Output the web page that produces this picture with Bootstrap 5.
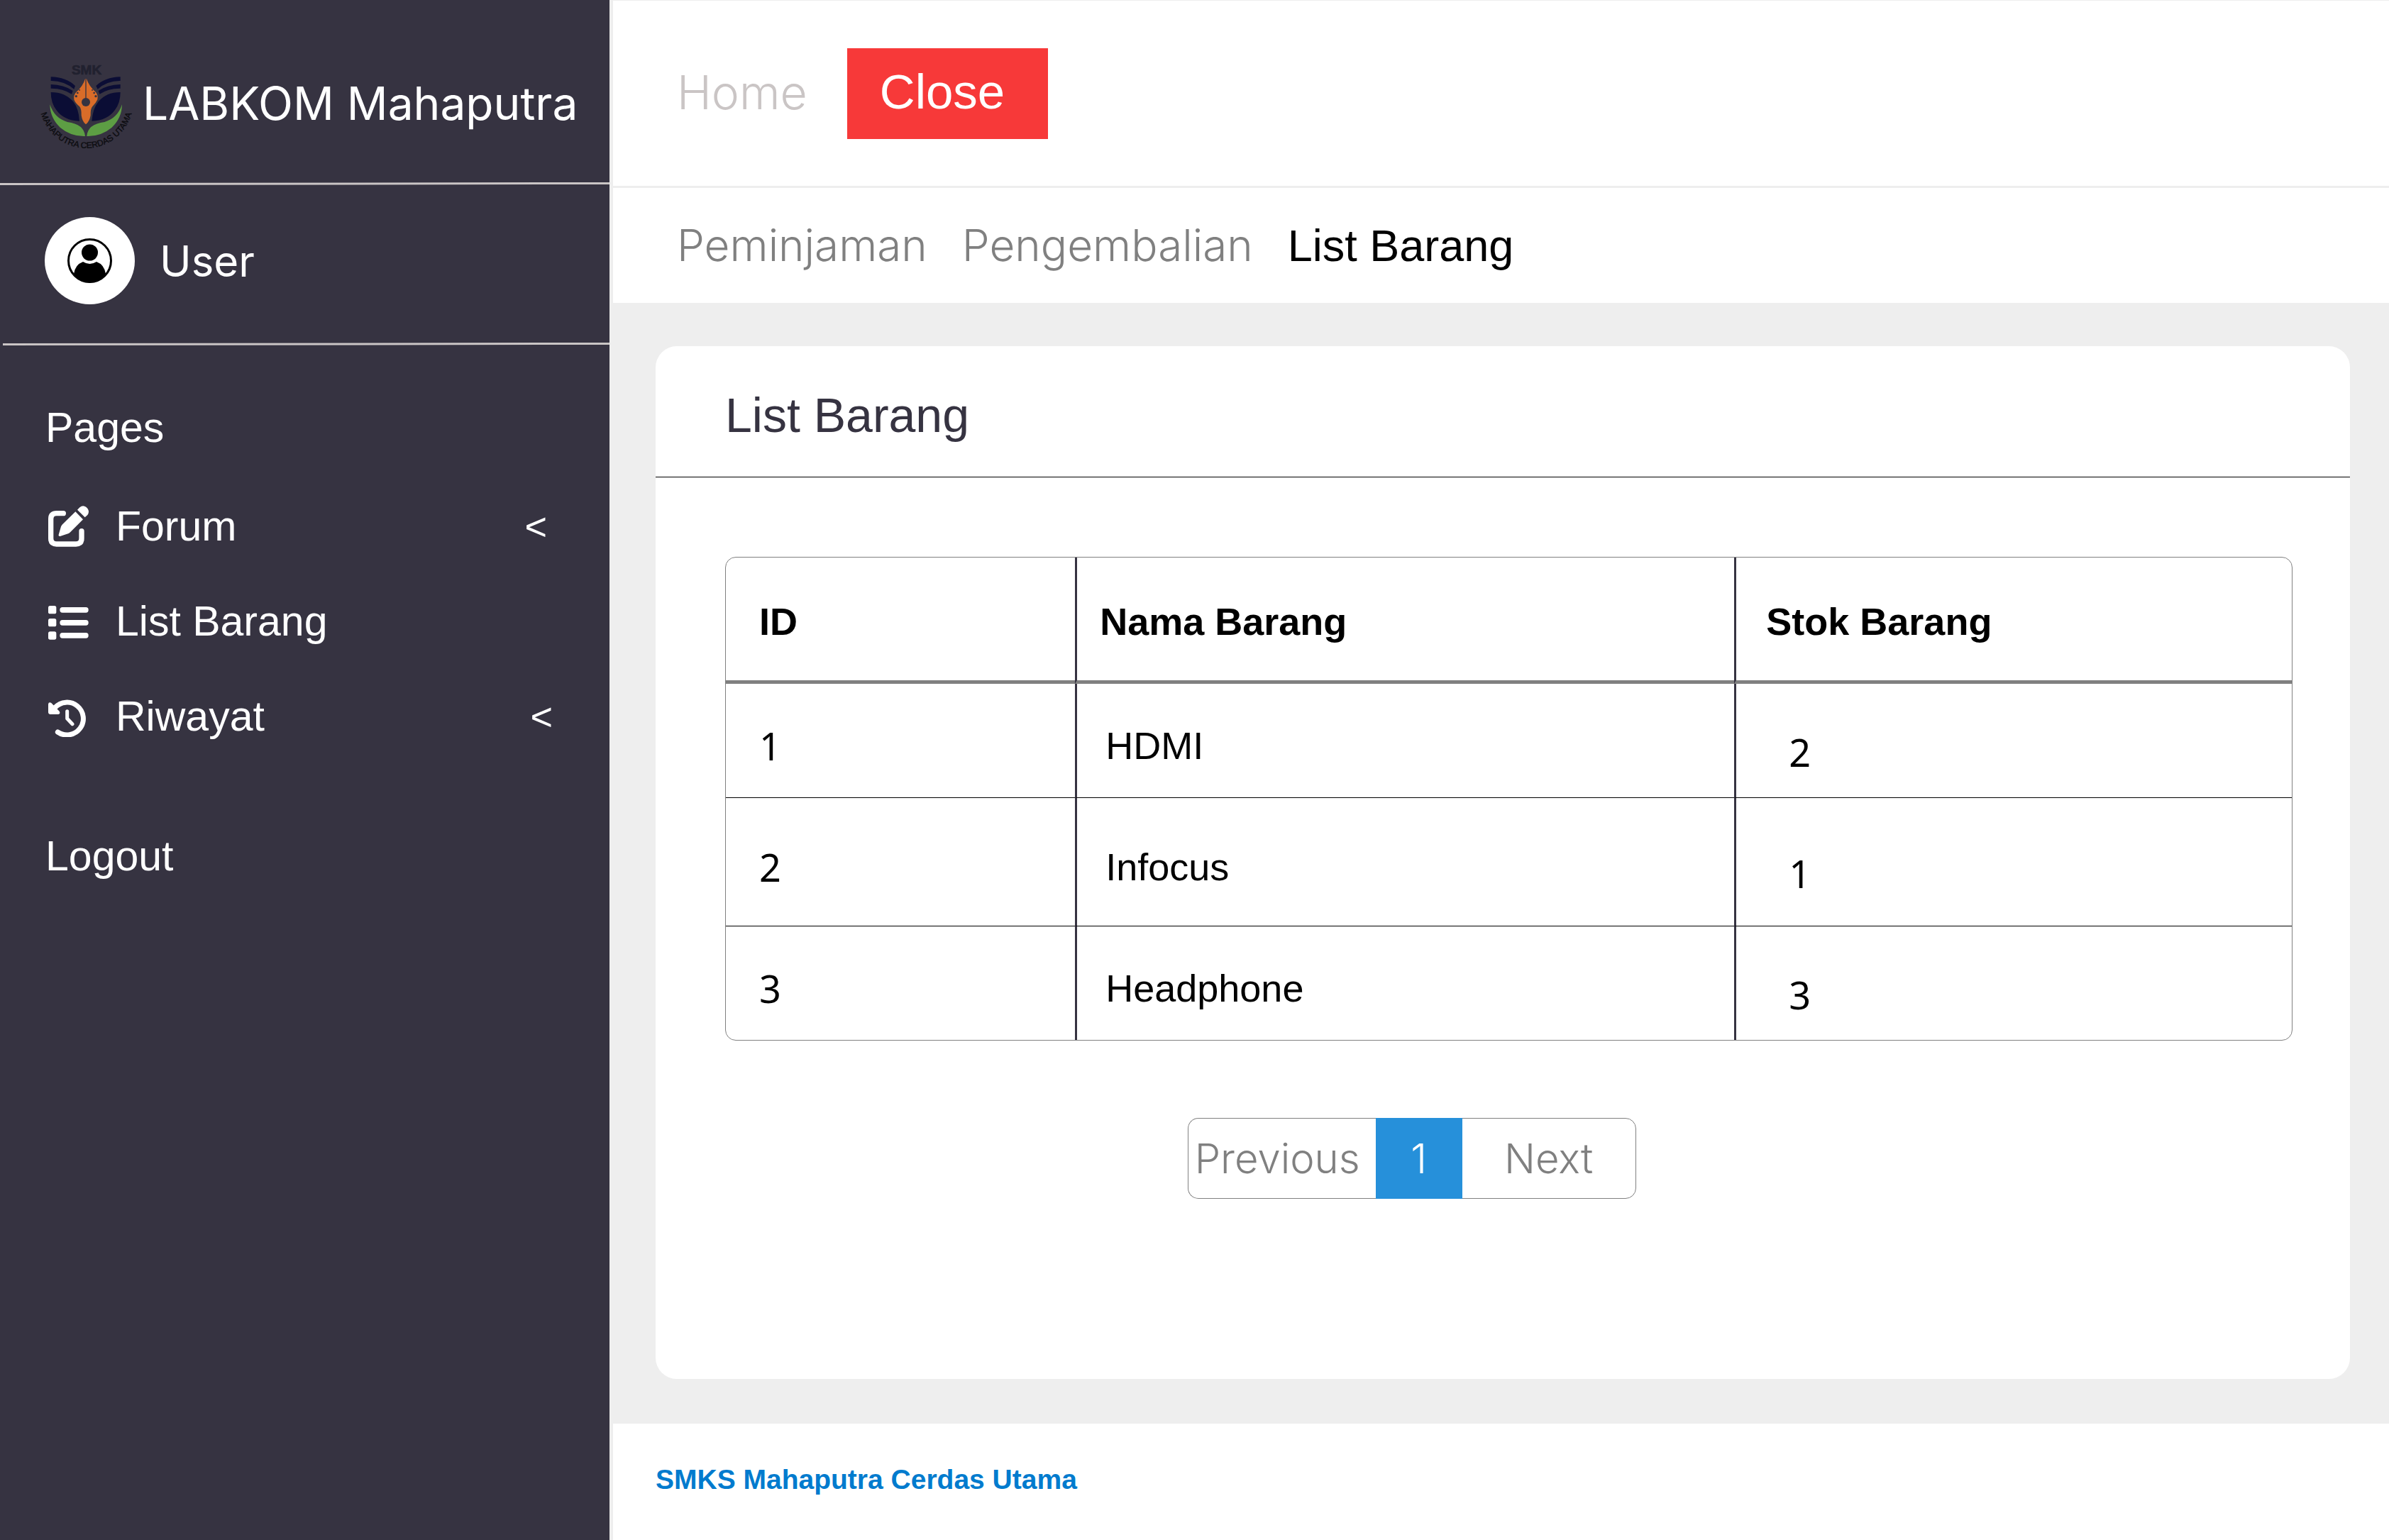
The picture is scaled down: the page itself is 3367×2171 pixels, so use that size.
<!DOCTYPE html>
<html lang="id">
<head>
<meta charset="utf-8">
<meta name="viewport" content="width=device-width, initial-scale=1">
<title>LABKOM Mahaputra - List Barang</title>
<link href="https://cdn.jsdelivr.net/npm/bootstrap@5.3.0/dist/css/bootstrap.min.css" rel="stylesheet">
<style>
  :root { --ink: #363341; --soft: #cac5c5; --canvas: #eeeeee; --muted: #808080; }
  body { font-family: "Liberation Sans", Arial, sans-serif; background: var(--canvas); color: #000; }
  a { text-decoration: none; color: inherit; }

  /* Sidebar */
  .side { width: 859px; background: var(--ink); color: #fff; font-size: 59px; line-height: 88px; }
  .side-brand { padding: 81px 20px 46px 52px; gap: 9px; font: 64px/88px Inter, sans-serif; white-space: nowrap; }
  .side-brand svg { width: 140px; height: 130px; overflow: visible; }
  .side-rule { height: 4px; width: 100%; display: block; }
  .side-user { padding: 45px 20px 54px 63px; gap: 35px; font: 60px/88px Inter, sans-serif; }
  .side-user svg { width: 127px; height: 123px; }
  .side-nav { padding: 72px 80px 0 64px; }
  .side-menu { margin: 28px 0 86px; }
  .side-menu a { height: 134px; padding-left: 4px; gap: 37px; }
  .side-menu svg { width: 58px; height: 58px; }
  .side-caret { font-size: 54px; }

  /* Top bars */
  .page-main { padding: 1px 0 0 5px; }
  .bar-top { padding: 67px 90px 66px; gap: 56px; font-size: 66px; line-height: 78px; }
  .bar-top a { color: var(--soft); padding-bottom: 4px; }
  .bar-top, .bar-sub { font-family: Inter, sans-serif; font-weight: 300; }
  .btn-close-page { --bs-btn-color: #fff; --bs-btn-bg: #f73939; --bs-btn-hover-color: #fff; --bs-btn-hover-bg: #dc2f2f;
    --bs-btn-font-family: "Liberation Sans", Arial, sans-serif;
    --bs-btn-border-width: 0; --bs-btn-border-radius: 0; font-size: 69px; line-height: 78px; padding: 23px 61px 27px 46px; }
  .bar-sub { margin-top: 3px; padding: 36px 90px; gap: 49px; font-size: 62px; line-height: 90px; color: var(--muted); }
  .bar-sub .active { color: #000; font-family: "Liberation Sans", Arial, sans-serif; font-size: 63px; }

  /* Card and table */
  .page-body { padding: 61px 55px 63px 60px; }
  .panel { --bs-card-border-width: 0; --bs-card-border-radius: 30px; }
  .panel-head { padding: 47px 98px 37px; border-bottom: 1px solid #000; }
  .panel-head h1 { font-size: 68px; line-height: 100px; font-weight: 400; color: var(--ink); margin: 0; }
  .panel-body { padding: 112px 81px 254px 98px; }
  .stock-frame { border: 1px solid var(--muted); border-radius: 15px; overflow: hidden; }
  .stock { border-collapse: separate; border-spacing: 0; table-layout: fixed; width: 100%; font-size: 54px; line-height: 80px; }
  .stock th, .stock td { height: 161px; padding: 14px 20px 0 47px; border-bottom: 1px solid #000; vertical-align: middle; }
  .stock th { height: 178px; padding-top: 7px; border-bottom: 5px solid var(--muted); }
  .stock tr:nth-child(2) td { height: 181px; }
  .stock tbody tr:last-child td { border-bottom: 0; height: 160px; }
  .stock th + th, .stock td + td { border-left: 3px solid var(--ink); }
  .stock th:nth-child(2) { padding-left: 32px; }
  .stock td:nth-child(2) { padding-left: 40px; }
  .stock th:nth-child(3) { padding-left: 42px; }
  .stock td:nth-child(3) { padding: 32px 20px 0 74px; }
  .stock .num { font-family: "Noto Sans", sans-serif; }

  /* Pagination */
  .pager { margin-top: 109px; padding-left: 29.5%; }
  .pager .pagination { --bs-pagination-font-size: 58px; --bs-pagination-color: var(--muted); --bs-pagination-border-color: var(--muted);
    --bs-pagination-border-radius: 15px; --bs-pagination-padding-x: 0; --bs-pagination-padding-y: 0;
    --bs-pagination-active-bg: #2690da; --bs-pagination-active-border-color: #2690da; line-height: 112px; text-align: center; }
  .pager .page-link { width: 246px; font-family: Inter, sans-serif; font-weight: 300; }
  .pager .page-item:first-child .page-link { width: 265px; padding-left: 9px; text-align: left; border-right: 0; }
  .pager .active .page-link { width: 122px; margin: 0; }

  .page-foot { padding: 48px 60px 54px; font-size: 39px; line-height: 62px; font-weight: 700; color: #007bce; }
</style>
</head>
<body>
<div class="d-flex min-vh-100">

  <aside class="side flex-shrink-0">
    <div class="side-brand d-flex align-items-center">
      <svg viewBox="36 33 420 390" role="img" aria-label="Logo SMK Mahaputra Cerdas Utama">
        <defs><path id="ring" d="M45 211A200 206 0 0 0 445 211"/></defs>
        <text x="246" y="105" text-anchor="middle" font-family="Liberation Sans" font-weight="700" font-size="57" fill="#21212f" stroke="#21212f" stroke-width="2">SMK</text>
        <g fill="#0b0d35">
          <path d="M95 115Q160 117 198 153L193 167Q150 131 95 132z"/>
          <path d="M95 147Q150 148 188 174L183 188Q145 163 95 164z"/>
          <path d="M95 180Q155 180 190 220Q213 250 216 302Q150 300 118 255Q95 225 95 180z"/>
          <path d="M389 115Q324 117 286 153L293 167Q334 131 389 132z"/>
          <path d="M389 147Q334 148 296 174L301 188Q339 163 389 164z"/>
          <path d="M389 180Q329 180 296 220Q272 250 268 302Q334 300 366 255Q389 225 389 180z"/>
        </g>
        <path fill="#d96c29" d="M240 124H246Q257 156 285 180Q296 193 292 211Q286 226 271 240Q262 250 263 278Q258 304 243 316Q228 304 224 278Q225 250 216 240Q198 226 193 211Q190 193 202 180Q230 156 240 124z"/>
        <path stroke="#363341" stroke-width="4" d="M243 124V210"/>
        <g fill="#363341"><circle cx="243" cy="222" r="18"/><circle cx="216" cy="171" r="3"/><circle cx="208" cy="183" r="4"/><circle cx="202" cy="197" r="5"/><circle cx="270" cy="171" r="3"/><circle cx="278" cy="183" r="4"/><circle cx="285" cy="197" r="5"/></g>
        <g fill="#5d9e44">
          <path d="M91 232Q110 290 165 306Q236 315 240 366Q180 368 135 330Q92 290 91 232z"/>
          <path d="M396 232Q377 290 322 306Q250 315 247 366Q306 368 352 330Q395 290 396 232z"/>
        </g>
        <text font-family="Liberation Sans" font-size="36" fill="#0c0c10" stroke="#0c0c10" text-anchor="middle"><textPath href="#ring" startOffset="50%">MAHAPUTRA CERDAS UTAMA</textPath></text>
      </svg>
      <span>LABKOM Mahaputra</span>
    </div>
    <svg class="side-rule" viewBox="0 0 859 4" preserveAspectRatio="none" aria-hidden="true"><path d="M0 1L859 0V3L0 4z" fill="#cac5c5"/></svg>
    <div class="side-user d-flex align-items-center">
      <svg viewBox="0 0 127 123" aria-hidden="true">
        <ellipse cx="63.500" cy="61.500" rx="63.500" ry="61.500" fill="#fff"/>
        <circle cx="63.500" cy="61.500" r="30" fill="none" stroke="#000" stroke-width="3"/>
        <circle cx="63.500" cy="50" r="11.500"/>
        <path d="M41 80Q43 67 54 63Q63.500 69 73 63Q84 67 86 80Q77 92.500 63.500 92.500Q50 92.500 41 80z"/>
      </svg>
      <span>User</span>
    </div>
    <svg class="side-rule" viewBox="0 0 859 4" preserveAspectRatio="none" aria-hidden="true"><path d="M4 1L859 0V3L4 4z" fill="#cac5c5"/></svg>
    <nav class="side-nav" aria-label="Pages">
      <div>Pages</div>
      <div class="side-menu d-flex flex-column">
        <a href="#" class="d-flex align-items-center">
          <svg viewBox="84 69 174 174" aria-hidden="true">
            <path d="M148 101H119Q95 101 95 125V207Q95 231 119 231H201Q225 231 225 207V176" fill="none" stroke="#fff" stroke-width="22" stroke-linecap="round"/>
            <path fill="#fff" d="M199 94L231 127L177 181Q173 185 168 187L134 198Q126 199 128 191L138 157Q140 152 144 148zM207 86L217 76Q230 64 244 74L250 80Q260 94 250 108L239 118z"/>
          </svg>
          <span>Forum</span><span class="side-caret ms-auto me-2" aria-hidden="true">&lt;</span>
        </a>
        <a href="#" class="d-flex align-items-center">
          <svg viewBox="84 471 174 174" fill="#fff" aria-hidden="true">
            <rect x="84" y="492" width="34" height="34" rx="8"/><rect x="84" y="546" width="34" height="34" rx="8"/><rect x="84" y="601" width="34" height="34" rx="8"/>
            <rect x="133" y="498" width="121" height="23" rx="11"/><rect x="133" y="552" width="121" height="23" rx="11"/><rect x="133" y="606" width="121" height="23" rx="11"/>
          </svg>
          <span>List Barang</span>
        </a>
        <a href="#" class="d-flex align-items-center">
          <svg viewBox="84 873 174 174" aria-hidden="true">
            <g fill="none" stroke="#fff" stroke-linecap="round"><path d="M112 923A69 69 0 1 1 124 1026" stroke-width="21"/><path d="M164 938V969L186 992" stroke-width="15" stroke-linejoin="round"/></g>
            <path fill="#fff" d="M84 908Q86 897 97 903L131 938Q137 948 126 951H91Q84 950 84 943z"/>
          </svg>
          <span>Riwayat</span><span class="side-caret ms-auto" aria-hidden="true">&lt;</span>
        </a>
      </div>
      <a href="#">Logout</a>
    </nav>
  </aside>

  <div class="page-main d-flex flex-column flex-grow-1">
    <header class="bar-top bg-white d-flex align-items-center">
      <a href="#">Home</a>
      <button type="button" class="btn btn-close-page">Close</button>
    </header>
    <nav class="bar-sub bg-white d-flex" aria-label="Menu">
      <a href="#">Peminjaman</a>
      <a href="#">Pengembalian</a>
      <a href="#" class="active" aria-current="page">List Barang</a>
    </nav>

    <main class="page-body d-flex flex-column flex-grow-1">
      <section class="card panel flex-grow-1">
        <div class="panel-head"><h1>List Barang</h1></div>
        <div class="panel-body">
          <div class="stock-frame">
            <table class="stock">
              <colgroup><col style="width:22.3%"><col style="width:42.1%"><col></colgroup>
              <thead><tr><th scope="col">ID</th><th scope="col">Nama Barang</th><th scope="col">Stok Barang</th></tr></thead>
              <tbody>
                <tr><td class="num">1</td><td>HDMI</td><td class="num">2</td></tr>
                <tr><td class="num">2</td><td>Infocus</td><td class="num">1</td></tr>
                <tr><td class="num">3</td><td>Headphone</td><td class="num">3</td></tr>
              </tbody>
            </table>
          </div>
          <nav class="pager" aria-label="Halaman">
            <ul class="pagination mb-0">
              <li class="page-item"><a class="page-link" href="#">Previous</a></li>
              <li class="page-item active"><a class="page-link" href="#" aria-current="page">1</a></li>
              <li class="page-item"><a class="page-link" href="#">Next</a></li>
            </ul>
          </nav>
        </div>
      </section>
    </main>

    <footer class="page-foot bg-white">SMKS Mahaputra Cerdas Utama</footer>
  </div>
</div>
<script src="https://cdn.jsdelivr.net/npm/bootstrap@5.3.0/dist/js/bootstrap.bundle.min.js"></script>
</body>
</html>
